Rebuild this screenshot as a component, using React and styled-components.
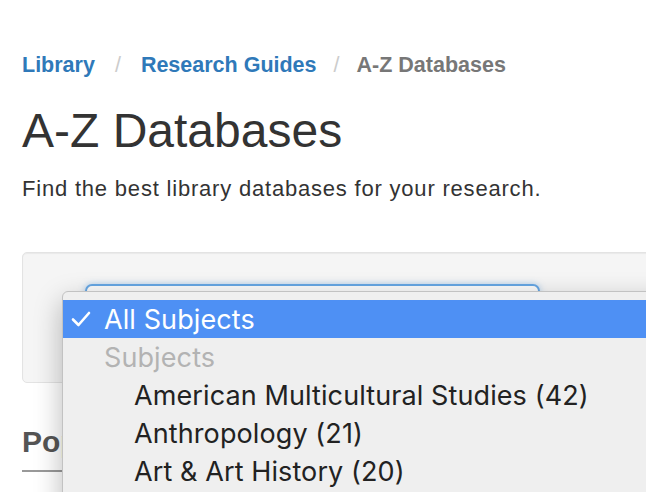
import React from "react";
import styled, { createGlobalStyle } from "styled-components";

const GlobalStyle = createGlobalStyle`
  html, body {
    margin: 0;
    padding: 0;
    background: #fff;
    overflow: hidden;
  }
  body {
    font-family: "Liberation Sans", Arial, sans-serif;
    color: #333;
  }
`;

const subjects = [
  { name: "American Multicultural Studies", count: 42 },
  { name: "Anthropology", count: 21 },
  { name: "Art & Art History", count: 20 },
  { name: "Biology", count: 33 },
  { name: "Business", count: 58 },
  { name: "Chemistry", count: 19 },
];

const Page = styled.div`
  width: 700px;
  height: 492px;
  box-sizing: border-box;
  padding: 50px 0 0 22px;
  overflow: hidden;
`;

const Breadcrumb = styled.nav`
  display: flex;
  align-items: center;
  font-size: 21.5px;
  line-height: 30px;
  font-weight: bold;
`;

const Crumb = styled.a`
  color: ${(p) => (p.$active ? "#777" : "#2f79b9")};
  text-decoration: none;
`;

const Slash = styled.span`
  color: #ccc;
  font-weight: normal;
  padding: 0 ${(p) => p.$pad}px;
`;

const Title = styled.h1`
  margin: 23px 0 0;
  font-size: 48px;
  line-height: 56px;
  font-weight: normal;
  color: #333;
`;

const Lead = styled.p`
  margin: 15px 0 0;
  font-size: 22px;
  line-height: 30px;
  letter-spacing: 0.8px;
  color: #333;
`;

const Well = styled.div`
  margin-top: 48px;
  width: 700px;
  height: 131px;
  box-sizing: border-box;
  padding: 31px 0 0 62px;
  background: #f5f5f5;
  border: 1px solid #e3e3e3;
  border-radius: 5px;
  box-shadow: inset 0 1px 1px rgba(0, 0, 0, 0.05);
`;

const SelectWrap = styled.div`
  position: relative;
  width: 455px;
`;

const SelectBox = styled.div`
  height: 46px;
  box-sizing: border-box;
  background: #fafafa;
  border: 2px solid #66a6e3;
  border-radius: 7px;
  box-shadow: 0 0 6px rgba(102, 166, 227, 0.5);
`;

const Menu = styled.ul`
  position: absolute;
  top: 7px;
  left: -23px;
  width: 640px;
  margin: 0;
  padding: 8px 0;
  list-style: none;
  background: #efefef;
  border: 1px solid #c2c2c2;
  border-radius: 6px;
  box-shadow: 0 10px 28px rgba(0, 0, 0, 0.28);
  font-family: Inter, "Noto Sans", sans-serif;
  font-size: 27px;
  letter-spacing: 0.1px;
  z-index: 10;
`;

const Option = styled.li`
  display: flex;
  align-items: center;
  height: 38px;
  padding-left: ${(p) => p.$indent}px;
  color: ${(p) => (p.$selected ? "#fff" : p.$group ? "#b3b3b3" : "#222")};
  background: ${(p) => (p.$selected ? "#4e90f4" : "transparent")};
  white-space: nowrap;
`;

const Check = styled.svg`
  width: 20px;
  height: 16px;
  margin: 0 13px 0 -33px;
  flex: none;
`;

const SectionHeading = styled.h2`
  margin: 41px 0 0;
  width: 640px;
  padding-bottom: 10px;
  font-size: 30px;
  line-height: 36px;
  font-weight: bold;
  color: #555;
  border-bottom: 2px solid #999;
`;

const App = () => {
  return (
    <>
      <GlobalStyle />
      <Page>
        <Breadcrumb>
          <Crumb href="#">Library</Crumb>
          <Slash $pad={20}>/</Slash>
          <Crumb href="#">Research Guides</Crumb>
          <Slash $pad={17}>/</Slash>
          <Crumb $active>A-Z Databases</Crumb>
        </Breadcrumb>
        <Title>A-Z Databases</Title>
        <Lead>Find the best library databases for your research.</Lead>
        <Well>
          <SelectWrap>
            <SelectBox />
            <Menu>
              <Option $selected $indent={41}>
                <Check viewBox="0 0 20 16">
                  <polyline
                    points="2,8.5 7.5,14 18,2"
                    fill="none"
                    stroke="#fff"
                    strokeWidth="2.6"
                    strokeLinecap="round"
                    strokeLinejoin="round"
                  />
                </Check>
                All Subjects
              </Option>
              <Option $group $indent={41}>
                Subjects
              </Option>
              {subjects.map((s) => (
                <Option key={s.name} $indent={71}>
                  {s.name} ({s.count})
                </Option>
              ))}
            </Menu>
          </SelectWrap>
        </Well>
        <SectionHeading>Popular Databases</SectionHeading>
      </Page>
    </>
  );
};

export default App;
